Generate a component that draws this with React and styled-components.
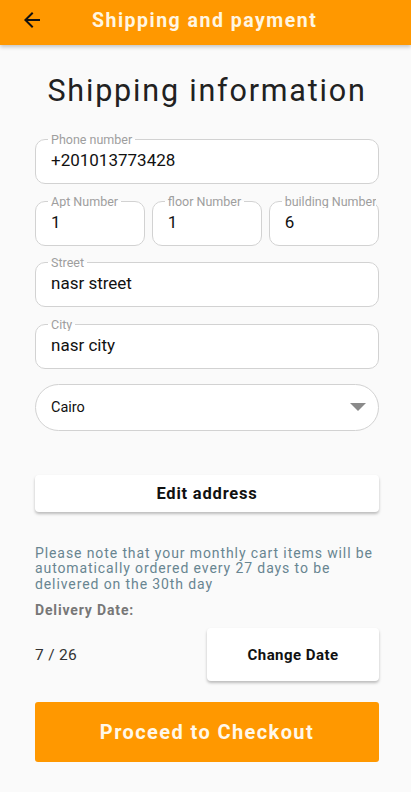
import * as React from "react";
import styled, { createGlobalStyle } from "styled-components";

const GlobalStyle = createGlobalStyle`
  body {
    margin: 0;
    background: #fafafa;
    font-family: Roboto, "Liberation Sans", sans-serif;
  }
`;

const Page = styled.div`
  width: 411px;
  min-height: 792px;
  background: #fafafa;
`;

const AppBar = styled.header`
  height: 45px;
  background: #ff9800;
  display: flex;
  align-items: center;
  padding: 0 0 5px 20px;
  box-sizing: border-box;
  box-shadow: 0 2px 4px rgba(0, 0, 0, 0.22);
  position: relative;
  z-index: 1;
`;

const BackButton = styled.button`
  width: 24px;
  height: 24px;
  padding: 0;
  border: 0;
  background: none;
  display: flex;
  align-items: center;
  justify-content: center;
`;

const BarTitle = styled.h1`
  margin: 0 0 0 48px;
  color: #fff6e2;
  font-size: 19.5px;
  font-weight: 700;
  letter-spacing: 1.5px;
`;

const Content = styled.main`
  padding: 0 32px 0 35px;
`;

const Heading = styled.h2`
  margin: 0;
  padding-top: 28px;
  text-align: center;
  font-size: 30.5px;
  line-height: 36px;
  font-weight: 400;
  color: #212121;
  letter-spacing: 1.8px;
`;

const Fields = styled.div`
  margin-top: 24px;
  display: flex;
  flex-direction: column;
  gap: 10.5px;
`;

const Row = styled.div`
  display: flex;
  gap: 6.5px;
`;

const Field = styled.fieldset`
  flex: 1;
  min-width: 0;
  margin: 0;
  padding: 4px 15px 13px;
  border: 1px solid #d2d2d2;
  border-radius: 10px;
  background: #fff;
`;

const Label = styled.legend`
  margin-left: -3px;
  padding: 0 3px;
  max-width: calc(100% + 16px);
  box-sizing: border-box;
  white-space: nowrap;
  overflow: hidden;
  font-size: 12.5px;
  line-height: 13px;
  color: #9e9e9e;
`;

const Value = styled.div`
  font-size: 17px;
  line-height: 20px;
  color: #111;
`;

const Select = styled.div`
  margin-top: 4.5px;
  height: 47px;
  box-sizing: border-box;
  border: 1px solid #d2d2d2;
  border-radius: 24px;
  background: #fff;
  display: flex;
  align-items: center;
  justify-content: space-between;
  padding: 0 12px 0 15px;
  font-size: 14.5px;
  color: #111;
`;

const Button = styled.button`
  display: flex;
  align-items: center;
  justify-content: center;
  border: 0;
  border-radius: 4px;
  background: ${p => (p.primary ? "#ff9800" : "#fff")};
  color: ${p => (p.primary ? "#fff8ea" : "#111")};
  font-family: Roboto, "Liberation Sans", sans-serif;
  font-weight: 700;
  font-size: ${p => p.size || 16}px;
  letter-spacing: ${p => p.spacing || 0}px;
  box-shadow: ${p =>
    p.primary ? "none" : "0 2px 3px rgba(0, 0, 0, 0.25)"};
  width: ${p => p.width || "100%"};
  height: ${p => p.height}px;
  padding: 0;
`;

const EditButton = styled(Button)`
  margin-top: 44px;
`;

const Note = styled.p`
  margin: 34px 0 0;
  font-size: 14px;
  line-height: 15.5px;
  letter-spacing: 0.9px;
  color: #688591;
`;

const DeliveryLabel = styled.div`
  margin-top: 10px;
  font-size: 14px;
  line-height: 16px;
  font-weight: 700;
  letter-spacing: 0.85px;
  color: #777;
`;

const DateRow = styled.div`
  margin-top: 10px;
  display: flex;
  align-items: center;
  justify-content: space-between;
`;

const DateText = styled.span`
  font-size: 15.5px;
  color: #333;
  letter-spacing: 0.3px;
`;

const CheckoutButton = styled(Button)`
  margin-top: 21px;
  border-radius: 3px;
`;

const BackIcon = () => (
  <svg width="24" height="24" viewBox="0 0 24 24">
    <path
      d="M20 11H7.83l5.59-5.59L12 4l-8 8 8 8 1.41-1.41L7.83 13H20v-2z"
      fill="#111"
    />
  </svg>
);

const App = () => {
  return (
    <Page>
      <GlobalStyle />
      <AppBar>
        <BackButton aria-label="back">
          <BackIcon />
        </BackButton>
        <BarTitle>Shipping and payment</BarTitle>
      </AppBar>
      <Content>
        <Heading>Shipping information</Heading>
        <Fields>
          <Field>
            <Label>Phone number</Label>
            <Value>+201013773428</Value>
          </Field>
          <Row>
            <Field>
              <Label>Apt Number</Label>
              <Value>1</Value>
            </Field>
            <Field>
              <Label>floor Number</Label>
              <Value>1</Value>
            </Field>
            <Field>
              <Label>building Number</Label>
              <Value>6</Value>
            </Field>
          </Row>
          <Field>
            <Label>Street</Label>
            <Value>nasr street</Value>
          </Field>
          <Field>
            <Label>City</Label>
            <Value>nasr city</Value>
          </Field>
          <Select>
            <span>Cairo</span>
            <svg width="16" height="8" viewBox="0 0 16 8">
              <path d="M0 0h16L8 8z" fill="#8a8a8a" />
            </svg>
          </Select>
        </Fields>
        <EditButton height={37} size={16.5} spacing={0.8}>
          Edit address
        </EditButton>
        <Note>
          Please note that your monthly cart items will be automatically
          ordered every 27 days to be delivered on the 30th day
        </Note>
        <DeliveryLabel>Delivery Date:</DeliveryLabel>
        <DateRow>
          <DateText>7 / 26</DateText>
          <Button width="172px" height={53} size={15} spacing={0.45}>
            Change Date
          </Button>
        </DateRow>
        <CheckoutButton primary height={60} size={20} spacing={1.4}>
          Proceed to Checkout
        </CheckoutButton>
      </Content>
    </Page>
  );
};

export default App;
